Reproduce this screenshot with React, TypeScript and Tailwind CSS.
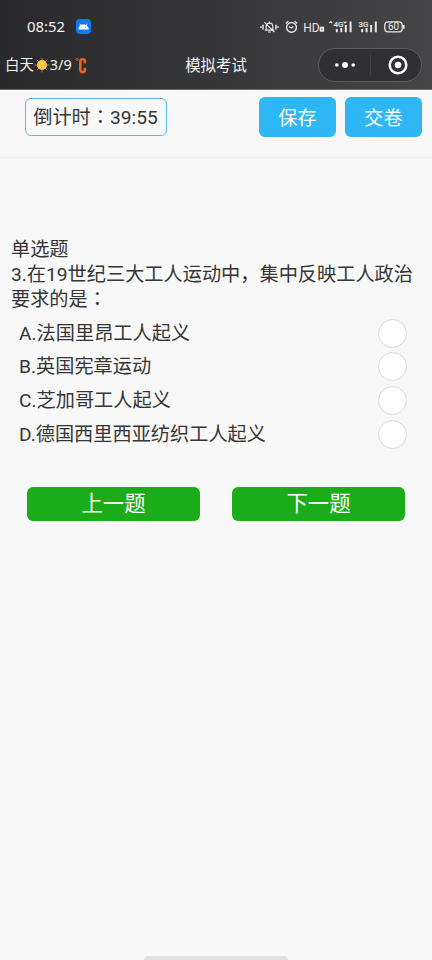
import { useState } from "react";

const options = [
  "A.法国里昂工人起义",
  "B.英国宪章运动",
  "C.芝加哥工人起义",
  "D.德国西里西亚纺织工人起义",
];

function Colon() {
  return <span className="font-['Noto_Sans_CJK_TC',sans-serif] leading-none">：</span>;
}

function StatusIcons() {
  return (
    <svg className="w-[146px] h-4" viewBox="0 0 146 16" fill="none" stroke="#e6e6e6" strokeWidth={1.2}>
      {/* muted bell */}
      <path d="M4.8 11.2h9.4M6.2 11V7.4a3.3 3.3 0 016.6 0V11M8 13h3M9.5 2.6v1.6M4.4 3.4l10 9.6" />
      <path d="M3 5.8v4.6M1 7.2v1.8M16 5.8v4.6M18 7.2v1.8" strokeWidth={1.5} />
      {/* alarm */}
      <circle cx="31.5" cy="8.4" r="4.9" strokeWidth={1.4} />
      <path d="M29 7.6l2.4 1.4 2-1.5M25.8 4.4l2.6-2.2M37.2 4.4l-2.6-2.2" strokeWidth={1.3} />
      {/* HD */}
      <text x="43.3" y="12.6" fontSize="12" fill="#e6e6e6" stroke="none" className="font-['Roboto',sans-serif]">HD</text>
      <rect x="60.6" y="8.6" width="2.6" height="3.2" strokeWidth={1.8} />
      {/* signal 4G */}
      <path d="M69.4 4l1.4-1.4L72.2 4M83.6 2.6L85 4l1.4-1.4" strokeWidth={1.2} />
      <text x="73.6" y="7.8" fontSize="8" fill="#e6e6e6" strokeWidth={0.2} className="font-['Roboto',sans-serif]">4G</text>
      <path d="M76.8 10v3.2M81.3 9v4.2M85.8 6v7.2M90.6 2.4v10.8" strokeWidth={2} />
      {/* signal 3G */}
      <text x="98.4" y="7.8" fontSize="8" fill="#e6e6e6" strokeWidth={0.2} className="font-['Roboto',sans-serif]">3G</text>
      <path d="M102.2 10v3.2M106.6 9v4.2M111.1 6v7.2M115.8 2.4v10.8" strokeWidth={2} />
      {/* battery */}
      <rect x="124.8" y="2.8" width="17.4" height="10" rx="3.4" strokeWidth={1.3} />
      <path d="M143.7 6v3.8" strokeWidth={1.8} />
      <text x="127.9" y="11.4" fontSize="10" fill="#e6e6e6" stroke="none" className="font-['Roboto',sans-serif]">60</text>
    </svg>
  );
}

function Sun() {
  return (
    <svg className="w-4 h-4" viewBox="0 0 16 16">
      <path
        d="M8 .6v14.8M.6 8h14.8M2.8 2.8l10.4 10.4M13.2 2.8L2.8 13.2"
        stroke="#b9823a"
        strokeWidth={1}
      />
      <circle cx="8" cy="8" r="5" fill="#fcc64b" />
    </svg>
  );
}

export default function App() {
  const [selected, setSelected] = useState<number | null>(null);

  return (
    <div className="flex flex-col w-[432px] h-[960px] overflow-hidden bg-[#f8f8f8] text-[#353535] font-['Roboto','Noto_Sans_CJK_SC',sans-serif]">
      <header className="h-[90px] shrink-0 bg-linear-to-r from-[#29292b] to-[#454547] border-b border-[#6b6b6b] text-[#f2f2f2] font-['Noto_Sans','Noto_Sans_CJK_SC',sans-serif]">
        <div className="flex items-center h-[42px] pt-[10px] pl-[27px] pr-[26px]">
          <span className="text-[14.9px] leading-5">08:52</span>
          <span className="ml-[11px] flex items-center justify-center w-[15px] h-[15px] rounded-[4px] bg-[#0d7bf5]">
            <svg className="w-[11px] h-[7px]" viewBox="0 0 11 7">
              <path d="M.3 6.5a5.2 5.2 0 0110.4 0z" fill="#fff" />
              <path d="M2.8 2.4L1.8.7M8.2 2.4L9.2.7" stroke="#fff" strokeWidth={0.8} />
              <circle cx="3.4" cy="4.6" r=".4" fill="#0d7bf5" />
              <circle cx="7.6" cy="4.6" r=".4" fill="#0d7bf5" />
            </svg>
          </span>
          <div className="ml-auto pt-0.5">
            <StatusIcons />
          </div>
        </div>

        <div className="grid grid-cols-[1fr_auto_1fr] items-center h-[46px] pl-[5px] pr-[10px]">
          <div className="flex items-center text-[14.4px] leading-5">
            <span>白天</span>
            <Sun />
            <span>3/9</span>
            <svg className="ml-[3px] w-3 h-[17px]" viewBox="0 0 12 17" fill="none" stroke="#f0601f">
              <circle cx="1.9" cy="2.4" r="1.1" strokeWidth={0.9} />
              <path d="M9.9 6.3V4.6Q9.9 2.2 7.6 2.2T5.3 4.6v8.2q0 2.4 2.3 2.4t2.3-2.4v-2" strokeWidth={2.6} />
            </svg>
          </div>
          <h1 className="pl-[5px] pt-px text-[15.4px] leading-5">模拟考试</h1>
          <div className="ml-auto flex items-center w-[104px] h-[34px] rounded-full border border-[#5d5d5f] bg-[#303032]">
            <button className="w-[51px] flex justify-center">
              <svg className="w-[22px] h-2" viewBox="0 0 22 8" fill="#fff">
                <circle cx="2.8" cy="4" r="1.8" />
                <circle cx="11" cy="4" r="3" />
                <circle cx="19.2" cy="4" r="1.8" />
              </svg>
            </button>
            <span className="w-px h-[22px] bg-[#3f3f41]" />
            <button className="flex-1 flex justify-center pl-[3px]">
              <svg className="w-5 h-5" viewBox="0 0 20 20">
                <circle cx="10" cy="10" r="8.3" fill="none" stroke="#fff" strokeWidth={2.5} />
                <circle cx="10" cy="10" r="3.3" fill="#fff" />
              </svg>
            </button>
          </div>
        </div>
      </header>

      <div className="flex items-start h-[68px] shrink-0 pt-[7px] pl-[25px] pr-[10px] border-b border-[#f0f0f0]">
        <div className="mt-px flex items-center justify-center w-[142px] h-[38px] pt-[3px] rounded-md border-[1.5px] border-[#5cb8ea] text-[19.2px] whitespace-nowrap">
          <span className="pr-px">倒计时<Colon />39:55</span>
        </div>
        <button className="ml-auto w-[77px] h-10 pt-1 rounded-md bg-[#2fb7f5] text-white text-[19.2px]">保存</button>
        <button className="ml-[9px] w-[77px] h-10 pt-1 rounded-md bg-[#2fb7f5] text-white text-[19.2px]">交卷</button>
      </div>

      <main className="pt-[79px]">
        <div className="px-[11px] text-[19.2px] leading-[25.2px]">
          <p>单选题</p>
          <p>
            3.在19世纪三大工人运动中，集中反映工人政治
            <br />
            要求的是<Colon />
          </p>
        </div>

        <div className="mt-[3.6px] pl-[19px] pr-[25px]">
          {options.map((option, i) => (
            <label key={option} className="flex items-center justify-between h-[33.7px] text-[19.2px]">
              <span className="pt-0.5">{option}</span>
              <input
                type="radio"
                name="answer"
                checked={selected === i}
                onChange={() => setSelected(i)}
                className="appearance-none w-[29px] h-[29px] rounded-full border-[1.5px] border-[#d9d9d9] bg-white checked:bg-[#1aad19]"
              />
            </label>
          ))}
        </div>

        <div className="flex justify-between mt-[35.6px] pl-[27px] pr-[27px]">
          <button className="w-[173px] h-[34px] rounded-md bg-[#1aad19] text-white text-[21.4px] leading-[34px]">上一题</button>
          <button className="w-[173px] h-[34px] rounded-md bg-[#1aad19] text-white text-[21.4px] leading-[34px]">下一题</button>
        </div>
      </main>

      <div className="mt-auto mx-auto w-36 h-1 rounded-t-sm bg-[#e2e2e2]" />
    </div>
  );
}
